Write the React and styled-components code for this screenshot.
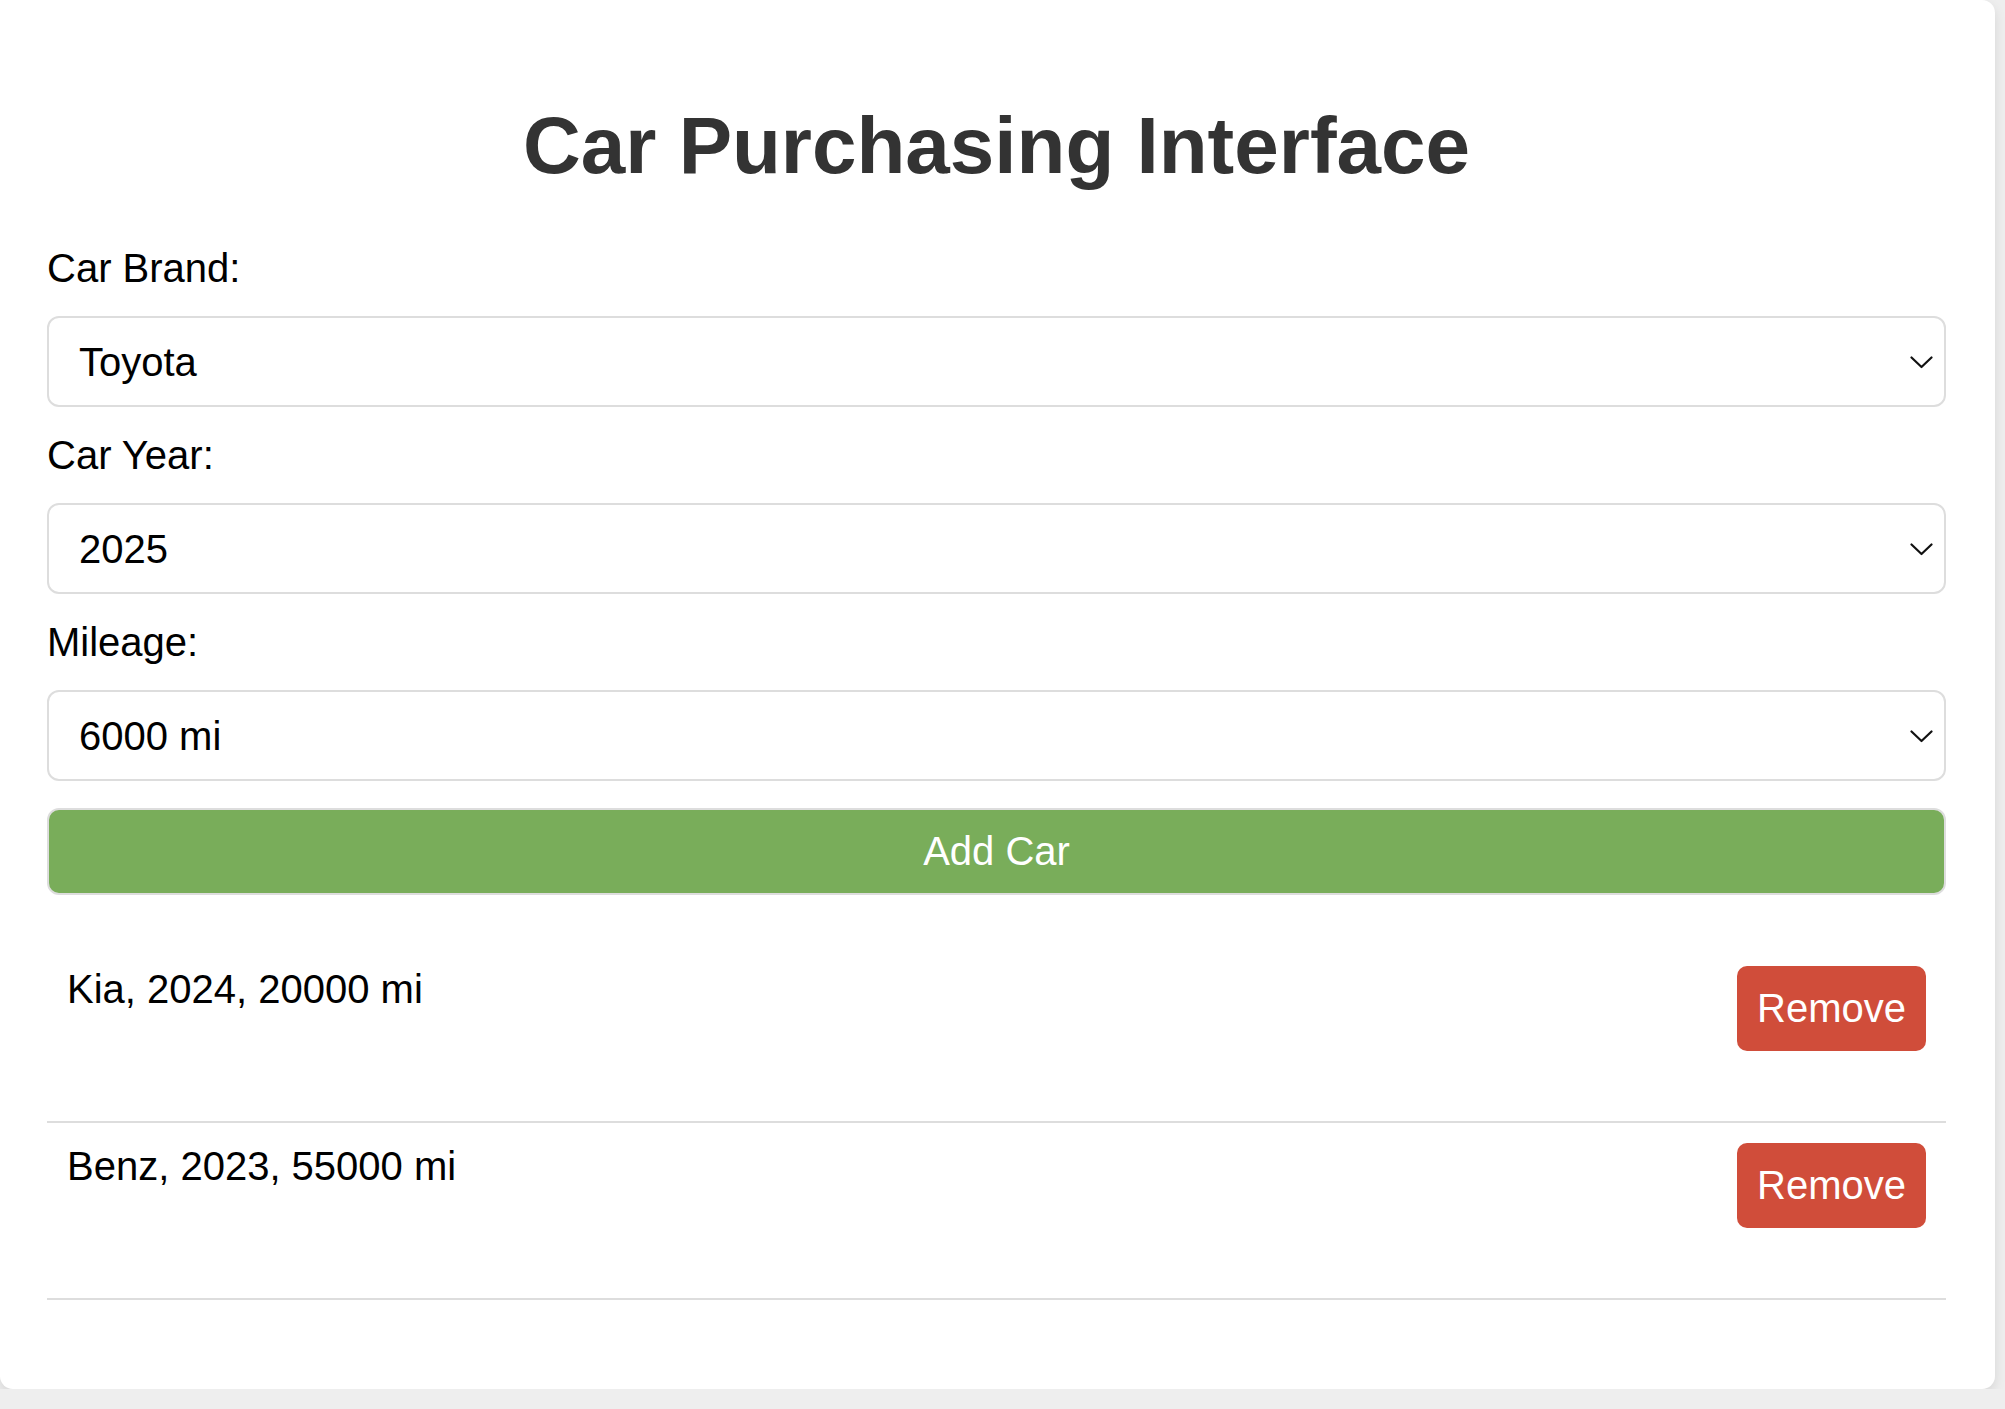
import React, { useState } from "react";
import styled, { createGlobalStyle } from "styled-components";

const GlobalStyle = createGlobalStyle`
  html, body {
    margin: 0;
    padding: 0;
    background: #eeeeee;
  }
  body {
    font-family: "Liberation Sans", Arial, sans-serif;
  }
  * { box-sizing: border-box; }
`;

const Card = styled.div`
  width: 1995px;
  background: #ffffff;
  border-radius: 0 13px 13px 13px;
  box-shadow: 0 5px 12px rgba(0, 0, 0, 0.1);
  padding: 47px 49px 47px 47px;
`;

const Title = styled.h1`
  margin: 53px 0 53px;
  font-size: 80px;
  line-height: 92px;
  font-weight: 700;
  color: #333333;
  text-align: center;
`;

const Label = styled.label`
  display: block;
  font-size: 40px;
  line-height: 46px;
  color: #000000;
  margin-bottom: 25px;
`;

const SelectWrap = styled.div`
  position: relative;
  margin-bottom: 25px;
`;

const Select = styled.select`
  appearance: none;
  -webkit-appearance: none;
  display: block;
  width: 100%;
  height: 91px;
  padding: 0 70px 0 30px;
  border: 2px solid #dddddd;
  border-radius: 12px;
  background: #ffffff;
  font-family: "Liberation Sans", Arial, sans-serif;
  font-size: 40px;
  color: #000000;
  outline: none;
`;

const Chevron = styled.svg`
  position: absolute;
  right: 13px;
  top: 50%;
  width: 23px;
  height: 13px;
  margin-top: -6px;
  pointer-events: none;
`;

const AddButton = styled.button`
  display: block;
  width: 100%;
  height: 87px;
  margin-top: 27px;
  border: 2px solid #dddddd;
  border-radius: 12px;
  background: #79ad5a;
  color: #ffffff;
  font-family: "Liberation Sans", Arial, sans-serif;
  font-size: 40px;
  cursor: pointer;
`;

const CarList = styled.ul`
  list-style: none;
  margin: 51px 0 42px;
  padding: 0;
`;

const CarRow = styled.li`
  display: flex;
  justify-content: space-between;
  align-items: flex-start;
  padding: 20px 20px 70px 20px;
  border-bottom: 2px solid #dddddd;
`;

const CarText = styled.span`
  font-size: 40px;
  line-height: 46px;
  color: #000000;
`;

const RemoveButton = styled.button`
  height: 85px;
  padding: 0 20px;
  border: none;
  border-radius: 10px;
  background: #d04d3a;
  color: #ffffff;
  font-family: "Liberation Sans", Arial, sans-serif;
  font-size: 40px;
  cursor: pointer;
`;

function Dropdown({ value, options, onChange }) {
  return (
    <SelectWrap>
      <Select value={value} onChange={(e) => onChange(e.target.value)}>
        {options.map((o) => (
          <option key={o} value={o}>
            {o}
          </option>
        ))}
      </Select>
      <Chevron viewBox="0 0 23 13" fill="none">
        <path d="M1.5 1.5 L11.5 11 L21.5 1.5" stroke="#111" strokeWidth="2.2" strokeLinecap="round" strokeLinejoin="round" />
      </Chevron>
    </SelectWrap>
  );
}

export default function App() {
  const [brand, setBrand] = useState("Toyota");
  const [year, setYear] = useState("2025");
  const [mileage, setMileage] = useState("6000 mi");
  const [cars, setCars] = useState([
    { id: 1, text: "Kia, 2024, 20000 mi" },
    { id: 2, text: "Benz, 2023, 55000 mi" },
  ]);

  const brands = ["Toyota", "Honda", "Ford", "Kia", "Benz", "BMW"];
  const years = ["2025", "2024", "2023", "2022", "2021", "2020"];
  const miles = ["6000 mi", "10000 mi", "20000 mi", "55000 mi"];

  const addCar = () => {
    setCars((c) => [...c, { id: Date.now(), text: `${brand}, ${year}, ${mileage}` }]);
  };

  return (
    <>
      <GlobalStyle />
      <Card>
        <Title>Car Purchasing Interface</Title>
        <Label>Car Brand:</Label>
        <Dropdown value={brand} options={brands} onChange={setBrand} />
        <Label>Car Year:</Label>
        <Dropdown value={year} options={years} onChange={setYear} />
        <Label>Mileage:</Label>
        <Dropdown value={mileage} options={miles} onChange={setMileage} />
        <AddButton onClick={addCar}>Add Car</AddButton>
        <CarList>
          {cars.map((car) => (
            <CarRow key={car.id}>
              <CarText>{car.text}</CarText>
              <RemoveButton onClick={() => setCars((c) => c.filter((x) => x.id !== car.id))}>
                Remove
              </RemoveButton>
            </CarRow>
          ))}
        </CarList>
      </Card>
    </>
  );
}
